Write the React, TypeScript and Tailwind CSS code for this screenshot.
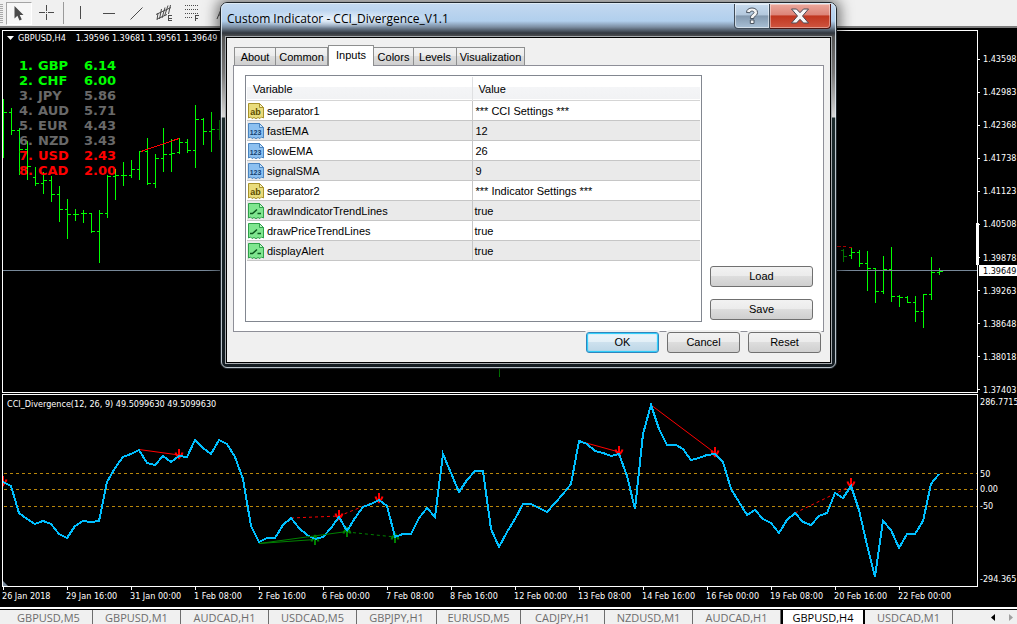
import React from "react";

type Bar = [x: number, high: number, low: number, open: number, close: number];

const bars: Bar[] = [
  [3, 99, 158, 112, 112], [11, 108, 135, 112, 130], [19, 128, 175, 130, 149], [27, 141, 180, 149, 166],
  [35, 167, 186, 177, 183], [43, 172, 194, 183, 180], [51, 176, 202, 180, 194], [59, 186, 222, 194, 209],
  [67, 199, 239, 209, 214], [75, 209, 221, 214, 214], [83, 210, 223, 213, 213], [91, 213, 233, 213, 231],
  [99, 210, 263, 231, 213], [107, 175, 218, 213, 176], [115, 169, 200, 176, 175], [123, 162, 186, 175, 175],
  [131, 160, 178, 175, 169], [139, 151, 180, 169, 151], [147, 138, 185, 151, 183], [155, 154, 188, 183, 158],
  [163, 128, 172, 158, 154], [171, 139, 172, 154, 153], [179, 138, 154, 152, 142], [187, 139, 153, 142, 150],
  [195, 105, 168, 150, 119], [203, 118, 145, 119, 131], [211, 112, 152, 131, 129], [219, 120, 140, 129, 129],
  [499, 350, 377, 360, 365],
  [843, 249, 262, 250, 256], [851, 248, 259, 255, 252], [859, 250, 267, 252, 263], [867, 251, 291, 263, 268],
  [875, 268, 303, 268, 291], [883, 256, 294, 291, 269], [891, 247, 302, 269, 296], [899, 295, 307, 296, 297],
  [907, 296, 303, 297, 302], [915, 296, 322, 302, 311], [923, 294, 328, 311, 294], [931, 257, 300, 294, 272],
  [939, 268, 275, 272, 271],
];

const cci =
  "3,482 11,486 19,513 27,519 35,524 43,521 51,524 59,534 67,538 75,526 83,521 91,522 99,521 107,482 115,468 123,457 131,454 139,450 147,463 155,465 163,456 171,462 179,456 187,457 195,440 203,448 211,454 219,440 227,444 235,457 243,479 251,526 259,542 267,538 275,538 283,525 291,518 299,528 307,535 315,539 323,537 331,528 339,517 347,531 355,518 363,507 371,504 379,500 387,506 395,537 403,534 411,534 419,518 427,508 435,517 443,454 451,473 459,492 467,480 475,471 483,471 491,529 499,547 507,532 515,519 523,504 531,504 539,508 547,512 555,503 563,494 571,484 579,441 587,444 595,451 603,453 611,456 619,454 627,476 635,509 643,434 651,405 659,429 667,445 676,445 683,449 691,460 699,458 707,455 715,454 723,462 731,489 739,502 747,515 755,510 763,519 771,523 779,533 787,520 795,513 803,522 811,525 819,516 827,513 835,493 843,498 851,486 859,510 867,545 875,577 883,521 891,530 899,548 907,534 915,534 923,521 931,484 939,474";

const prices = ["1.43598", "1.42983", "1.42368", "1.41738", "1.41123", "1.40508", "1.39878", "1.39263", "1.38648", "1.38018", "1.37403"];

const dates = [
  "26 Jan 2018", "29 Jan 16:00", "31 Jan 00:00", "1 Feb 08:00", "2 Feb 16:00", "6 Feb 00:00", "7 Feb 08:00", "8 Feb 16:00",
  "12 Feb 00:00", "13 Feb 08:00", "14 Feb 16:00", "16 Feb 00:00", "19 Feb 08:00", "20 Feb 16:00", "22 Feb 00:00",
];

const ranks = [
  ["1.", "GBP", "6.14", "text-[#00ff00]"],
  ["2.", "CHF", "6.00", "text-[#00ff00]"],
  ["3.", "JPY", "5.86", "text-[#696969]"],
  ["4.", "AUD", "5.71", "text-[#696969]"],
  ["5.", "EUR", "4.43", "text-[#696969]"],
  ["6.", "NZD", "3.43", "text-[#696969]"],
  ["7.", "USD", "2.43", "text-[#ff0000]"],
  ["8.", "CAD", "2.00", "text-[#ff0000]"],
];

const chartTabs = [
  ["GBPUSD,M5", "w-[88px]"], ["GBPUSD,M1", "w-[88px]"], ["AUDCAD,H1", "w-[88px]"], ["USDCAD,M5", "w-[88px]"],
  ["GBPJPY,H1", "w-[80px]"], ["EURUSD,M5", "w-[84px]"], ["CADJPY,H1", "w-[84px]"], ["NZDUSD,M1", "w-[88px]"],
  ["AUDCAD,H1", "w-[88px]"], ["GBPUSD,H4", "w-[84px]"], ["USDCAD,M1", "w-[88px]"],
];

const params: [kind: "ab" | "num" | "bool", name: string, value: string][] = [
  ["ab", "separator1", "*** CCI Settings ***"],
  ["num", "fastEMA", "12"],
  ["num", "slowEMA", "26"],
  ["num", "signalSMA", "9"],
  ["ab", "separator2", "*** Indicator Settings ***"],
  ["bool", "drawIndicatorTrendLines", "true"],
  ["bool", "drawPriceTrendLines", "true"],
  ["bool", "displayAlert", "true"],
];

const chartFont = "font-['DejaVu_Sans_Condensed','DejaVu_Sans',sans-serif] text-[9px] leading-[12px]";
const uiFont = "font-['Liberation_Sans',Arial,sans-serif] text-[11px]";

function Toolbar() {
  return (
    <header className="flex h-7 shrink-0 items-center border-b-2 border-[#7c7c7c] bg-[#f0f0f0] text-[#4b4b4b]">
      <svg width="6" height="24" className="shrink-0" shapeRendering="crispEdges">
        {[3, 5, 7, 9, 11, 13, 15, 17, 19, 21].map((y) => (
          <rect key={y} x="0" y={y} width="3" height="1" fill="#a9a9a9" />
        ))}
      </svg>
      <button aria-label="Cursor" className="flex h-[23px] w-[26px] items-center justify-center border border-[#fff] border-t-[#a5a5a5] border-l-[#a5a5a5] bg-[#f7f7f7]">
        <svg width="12" height="16" viewBox="0 0 12 16">
          <path d="M1.500 1v12.500l2.900-2.700L6.500 15.500l2.300-1-2.100-4.600H10.500z" fill="#4b4b4b" />
        </svg>
      </button>
      <button aria-label="Crosshair" className="ml-[7px]">
        <svg width="16" height="16" viewBox="0 0 16 16" stroke="currentColor" shapeRendering="crispEdges">
          <path d="M7.500 0v6M7.500 9v6M0 7.500h6M9 7.500h6M7 7.500h1" />
        </svg>
      </button>
      <span className="ml-2 h-[22px] w-px bg-[#9a9a9a]" />
      <button aria-label="Vertical line" className="ml-[9px]">
        <svg width="16" height="16" viewBox="0 0 16 16" stroke="currentColor" shapeRendering="crispEdges">
          <path d="M7.500 1v13" />
        </svg>
      </button>
      <button aria-label="Horizontal line" className="ml-[13px]">
        <svg width="16" height="16" viewBox="0 0 16 16" stroke="currentColor" shapeRendering="crispEdges">
          <path d="M1 8.500h12" />
        </svg>
      </button>
      <button aria-label="Trendline" className="ml-[11px]">
        <svg width="16" height="16" viewBox="0 0 16 16" stroke="currentColor">
          <path d="M1.500 14.500 13.500 2.500" />
        </svg>
      </button>
      <button aria-label="Equidistant channel" className="ml-[11px]">
        <svg width="18" height="18" viewBox="0 0 18 18" stroke="currentColor" fill="none">
          <path d="M0 10.500 15 3.500M1 15 11 10.500M2 9l-1 7M5.500 5l-2 10M9 3.500 6 14M12 1.500 8.500 12M14.500 1l-2 9" />
          <path d="M15.500 11.500h-3v5h3M12.500 14h3" shapeRendering="crispEdges" />
        </svg>
      </button>
      <button aria-label="Fibonacci retracement" className="ml-[10px]">
        <svg width="18" height="18" viewBox="0 0 18 18" stroke="currentColor" fill="none" shapeRendering="crispEdges">
          <path d="M1 1.500h14M1 5.500h14M1 9.500h14M1 13.500h8" strokeDasharray="1 1" />
          <path d="M11.500 17v-6M11 11.500h4M11 14.500h3" />
        </svg>
      </button>
      <button aria-label="Text" className="ml-[14px]">
        <svg width="12" height="16" viewBox="0 0 12 16" stroke="currentColor" fill="none">
          <path d="M1 14 6 2l5 12M3 10h6" />
        </svg>
      </button>
    </header>
  );
}

function PriceChart() {
  return (
    <section className="flex min-h-0 flex-1">
      <div className="relative min-w-0 flex-1 overflow-hidden border border-white">
        <svg className="absolute inset-0 size-full" shapeRendering="crispEdges">
          <g transform="translate(-3 -31)">
            <g fill="#00ff00">
              {bars.map(([x, high, low, open, close]) => (
                <g key={x} opacity={x === 843 || x === 219 || x === 499 ? 0.55 : 1}>
                  <rect x={x} y={high} width="1" height={low - high} />
                  <rect x={x - 2} y={open} width="2" height="1" />
                  <rect x={x + 1} y={close} width="3" height="1" />
                </g>
              ))}
            </g>
            <rect x="0" y="270" width="200%" height="1" fill="#778899" />
            <path d="M141 151.500 179 138.500" stroke="#ff0000" fill="none" />
            <path d="M836 246.500h5M843 246.500h3M849 247.500h3" stroke="#c00000" />
          </g>
        </svg>
        <div className={`relative flex items-center pt-px pl-[4px] text-white ${chartFont}`}>
          <svg width="7" height="4" viewBox="0 0 7 4" className="mr-[4px]">
            <path d="M0 0h7L3.500 4z" fill="#fff" />
          </svg>
          <span className="mr-[10px]">GBPUSD,H4</span>
          <span>1.39596 1.39681 1.39561 1.39649</span>
        </div>
        <ol className="relative mt-[14px] ml-4 w-[112px] font-['DejaVu_Sans',sans-serif] text-[13px] leading-[15px] font-bold">
          {ranks.map(([place, code, score, color]) => (
            <li key={code} className={`grid grid-cols-[19px_46px_1fr] ${color}`}>
              <span>{place}</span>
              <span>{code}</span>
              <span>{score}</span>
            </li>
          ))}
        </ol>
      </div>
      <div className={`relative -mb-[3px] flex w-[39px] shrink-0 flex-col justify-between pt-[23px] text-white ${chartFont}`}>
        {prices.map((price) => (
          <div key={price} className="flex items-center gap-[3px]">
            <span className="h-px w-[2px] shrink-0 bg-white" />
            {price}
          </div>
        ))}
        <span className="absolute top-[193px] -left-[2px] h-[42px] w-[3px] bg-white" />
        <span className="absolute top-[235px] left-px flex h-[11px] w-10 items-center bg-white pl-1 text-black">1.39649</span>
      </div>
    </section>
  );
}

function Arrow({ x, y, up = false }: { x: number; y: number; up?: boolean }) {
  return (
    <g transform={`translate(${x} ${y})${up ? " scale(1 -1)" : ""}`} stroke={up ? "#008000" : "#ff0000"} fill="none">
      <path d="M0-5V5" strokeWidth="2" />
      <path d="M-3.500-1.500C-3 1-1.500 2 0 4 1.500 2 3 1 3.500-1.500" strokeWidth="2" />
    </g>
  );
}

function IndicatorChart() {
  return (
    <section className="mt-px flex h-[193px] shrink-0">
      <div className="relative min-w-0 flex-1 overflow-hidden border border-white">
        <svg className="absolute inset-0 size-full">
          <g transform="translate(-3 -395)" fill="none">
            <path d="M4 473.500h2000M4 489.500h2000M4 506.500h2000" stroke="#b8860b" strokeDasharray="3 3" shapeRendering="crispEdges" />
            <g stroke="#ff0000">
              <path d="M139 449.500 179 455M579 441 619 452M651 405 715 453" />
              <path d="M291 518 339 516 379 500M795 513 851 486" strokeDasharray="3 3" />
            </g>
            <Arrow x={3} y={481} />
            <Arrow x={179} y={454} />
            <Arrow x={339} y={515} />
            <Arrow x={379} y={498} />
            <Arrow x={619} y={451} />
            <Arrow x={715} y={452} />
            <Arrow x={851} y={483} />
            <Arrow x={315} y={540} up />
            <Arrow x={347} y={532} up />
            <Arrow x={395} y={538} up />
            <polyline points={cci} stroke="#00bfff" strokeWidth="2" shapeRendering="crispEdges" />
            <g stroke="#008000">
              <path d="M259 543.500 347 531.500M259 543.500 315 539.500" />
              <path d="M347 532 395 537" strokeDasharray="3 3" />
            </g>
            <path d="M3 581v5h5z" fill="#778899" />
          </g>
        </svg>
        <p className={`relative pt-[3px] pl-[4px] text-white ${chartFont}`}>CCI_Divergence(12, 26, 9) 49.5099630 49.5099630</p>
      </div>
      <div className={`flex w-[39px] shrink-0 flex-col overflow-hidden pt-[2px] pl-[2px] text-white ${chartFont}`}>
        <span>286.7715</span>
        <span className="mt-[60px]">50</span>
        <span className="mt-[3px]">0.00</span>
        <span className="mt-[5px]">-50</span>
        <span className="mt-[61px]">-294.365</span>
      </div>
    </section>
  );
}

function ParamIcon({ kind }: { kind: "ab" | "num" | "bool" }) {
  const fill = kind === "ab" ? "#e9dc7c" : kind === "num" ? "#8cc0f0" : "#7fe68f";
  const edge = kind === "ab" ? "#a8922a" : kind === "num" ? "#4a84c0" : "#2fa04a";
  const ink = kind === "ab" ? "#5d4c00" : kind === "num" ? "#12406f" : "#0d5a20";
  return (
    <svg width="16" height="16" viewBox="0 0 16 16" className="shrink-0">
      <path d="M.5.500h11l4 4v10.500l-2-1-1.500 1.500-2-1-2 1.200-2-1.200-2 1-1.500-1.500-2 1z" fill={fill} stroke={edge} />
      <path d="M11.500.500v4h4z" fill="#fff" fillOpacity=".5" stroke={edge} />
      {kind === "bool" ? (
        <path d="M2 10.500h2.500l4.500-4M9.500 10.500H13" stroke={ink} strokeWidth="1.500" fill="none" />
      ) : (
        <text
          x="7.500"
          y="11.500"
          textAnchor="middle"
          fill={ink}
          className={kind === "ab" ? "font-['Liberation_Sans',sans-serif] text-[9px] font-bold" : "font-['Liberation_Sans',sans-serif] text-[7px] font-bold"}
        >
          {kind === "ab" ? "ab" : "123"}
        </text>
      )}
    </svg>
  );
}

function PushButton({ children, className = "" }: { children: React.ReactNode; className?: string }) {
  return (
    <button
      className={`h-[21px] rounded-[3px] border border-[#707070] bg-[linear-gradient(#f2f2f2_0%,#ebebeb_49%,#dddddd_50%,#cfcfcf_100%)] text-center text-[11px] leading-none text-black ${className}`}
    >
      {children}
    </button>
  );
}

function Tab({ label, className }: { label: string; className: string }) {
  return (
    <button
      role="tab"
      aria-selected="false"
      className={`h-[18px] border border-b-0 border-[#8e8f8f] bg-[linear-gradient(#f3f3f3_0%,#ebebeb_49%,#dddddd_50%,#cfcfcf_100%)] pt-px text-center ${className}`}
    >
      {label}
    </button>
  );
}

function InputsDialog() {
  return (
    <div
      role="dialog"
      aria-label="Custom Indicator - CCI_Divergence_V1.1"
      className={`absolute top-[2px] left-[220px] w-[617px] rounded-[7px] border border-[#20262c] bg-[linear-gradient(#c4d9f0_0px,#b1cfed_18px,#7c8ea2_24px,#30363e_30px,#555_34px,#777_70px,#d8d8d8_114px,#1c2a2c_115px,#141c22_100%)] shadow-[0_0_14px_3px_rgba(0,0,0,0.55)] ${uiFont} text-black`}
    >
      <div className="rounded-[6px] border border-[#e3edf5]/80 px-[4px] pb-[4px]">
        <div className="flex h-[33px] items-start rounded-t-[5px]">
          <h1 className="mt-[6px] bg-[radial-gradient(closest-side,rgba(255,255,255,0.75),rgba(255,255,255,0))] pl-px font-['Open_Sans','Noto_Sans',sans-serif] text-[12px] leading-[18px]">
            Custom Indicator - CCI_Divergence_V1.1
          </h1>
          <div className="ml-auto flex">
            <button aria-label="Help" className="flex h-[25px] w-9 items-center justify-center rounded-bl-[4px] border border-t-0 border-[#3f4b58] bg-[linear-gradient(#c9dcef_0%,#b3c8dd_45%,#8399af_50%,#a9c0d6_100%)] shadow-[inset_0_0_0_1px_rgba(255,255,255,0.5)]">
              <svg width="14" height="18" viewBox="0 0 14 18">
                <path
                  d="M1.500 5.500C1.500 2.500 4 1 7 1s5.500 1.600 5.500 4.400c0 2.600-1.700 3.300-3 4.300-.5.400-.6.900-.6 1.800H5.400c0-2 .4-3 1.800-4C8.300 6.700 9 6.300 9 5.500 9 4.600 8.200 4.100 7 4.100s-2 .6-2 1.600zM5.300 13h3.700v3.500H5.300z"
                  fill="#f4f4f4"
                  stroke="#4a5461"
                />
              </svg>
            </button>
            <button aria-label="Close" className="flex h-[25px] w-[61px] items-center justify-center rounded-br-[4px] border border-t-0 border-l-0 border-[#4a1410] bg-[linear-gradient(#eba89c_0%,#dc8478_45%,#c0361f_50%,#cf5540_100%)] shadow-[inset_0_0_0_1px_rgba(255,255,255,0.4)]">
              <svg width="20" height="16" viewBox="0 0 20 16">
                <path d="M1.500 1h5L10 4.700 13.500 1h5l-6 7 6 7h-5L10 11.300 6.500 15h-5l6-7z" fill="#f6f6f6" stroke="#4d4a55" />
              </svg>
            </button>
          </div>
        </div>

        <div className="border border-black bg-[#f0f0f0] pr-[6px] pb-[9px] pl-[6px] outline outline-1 outline-[#a5a9ad]">
          <div role="tablist" className="mt-[7px] flex items-end pl-px">
            <Tab label="About" className="w-[42px]" />
            <Tab label="Common" className="w-[52px] border-l-0" />
            <button role="tab" aria-selected="true" className="relative -mb-px h-[21px] w-[46px] border border-b-0 border-[#8e8f8f] bg-white pb-px text-center">
              Inputs
            </button>
            <Tab label="Colors" className="w-10 border-l-0" />
            <Tab label="Levels" className="w-[43px] border-l-0" />
            <Tab label="Visualization" className="w-[68px] border-l-0" />
          </div>

          <div className="flex border border-[#8e8f98] bg-white pt-[9px] pr-[10px] pb-[9px] pl-[11px]">
            <div className="h-[247px] min-w-0 flex-1 border border-[#828790] p-px">
              <table className="w-full table-fixed border-collapse">
                <thead>
                  <tr className="h-[23px] border-b border-[#d5d5d5] bg-[linear-gradient(#ffffff_0%,#ffffff_45%,#f4f5f7_46%,#f1f2f4_100%)] text-left">
                    <th className="w-[225px] border-r border-[#dfe0e2] pt-[2px] pl-[6px] font-normal">Variable</th>
                    <th className="pt-[2px] pl-[6px] font-normal">Value</th>
                  </tr>
                </thead>
                <tbody>
                  {params.map(([kind, name, value]) => (
                    <tr key={name} className="h-5 border-b border-[#c6c6c6] even:bg-[#eaeaea]">
                      <td className="border-r border-[#c6c6c6] py-0 pl-px">
                        <span className="flex items-center gap-[3px] pt-px leading-[16px]">
                          <ParamIcon kind={kind} />
                          {name}
                        </span>
                      </td>
                      <td className={kind === "bool" ? "pt-px pl-[2px] leading-[16px]" : "pt-px pl-[3px] leading-[16px]"}>{value}</td>
                    </tr>
                  ))}
                </tbody>
              </table>
            </div>
            <div className="ml-2 flex w-[103px] flex-col justify-end gap-3 pb-[2px]">
              <PushButton>Load</PushButton>
              <PushButton>Save</PushButton>
            </div>
          </div>

          <div className="flex justify-end gap-2 pr-[3px]">
            <button className="relative h-[21px] w-[73px] rounded-[3px] border border-[#2f86bd] bg-[linear-gradient(#edf5fa_0%,#e2eff7_49%,#cde1ee_50%,#bcd6e6_100%)] text-center text-[11px] leading-none shadow-[inset_0_0_1px_1px_#22ccfb,0_0_0_2px_#f0f0f0]">
              OK
            </button>
            <PushButton className="relative w-[73px] shadow-[0_0_0_2px_#f0f0f0]">Cancel</PushButton>
            <PushButton className="relative w-[73px] shadow-[0_0_0_2px_#f0f0f0]">Reset</PushButton>
          </div>
        </div>
      </div>
    </div>
  );
}

export default function App() {
  return (
    <div className="relative flex h-screen flex-col overflow-hidden bg-black">
      <Toolbar />
      <main className="flex min-h-0 flex-1 flex-col pt-[2px] pl-[2px]">
        <PriceChart />
        <IndicatorChart />
        <div className={`flex h-5 shrink-0 overflow-hidden text-white ${chartFont}`}>
          {dates.map((date) => (
            <div key={date} className="w-16 shrink-0 whitespace-nowrap">
              <div className="ml-px h-[3px] w-px bg-white" />
              {date}
            </div>
          ))}
        </div>
      </main>
      <nav className="flex h-[17px] shrink-0 overflow-hidden border-t-2 border-white bg-[#f0f0f0] font-['Open_Sans','Noto_Sans',sans-serif] text-[11px] leading-[16px] text-[#6d6d6d]">
        <span className="w-[5px] border-t border-black" />
        {chartTabs.map(([label, width], index) =>
          label === "GBPUSD,H4" ? (
            <button key={index} aria-current="page" className={`shrink-0 border-x-2 border-t border-black bg-white text-center text-black ${width}`}>
              {label}
            </button>
          ) : (
            <button key={index} className={`shrink-0 border-t border-black text-center ${width}`}>
              <span className="block border-r border-[#6d6d6d]">{label}</span>
            </button>
          ),
        )}
        <span className="flex flex-1 items-center justify-end gap-[14px] border-t border-black pr-1">
          <button aria-label="Scroll left">
            <svg width="4" height="7" viewBox="0 0 4 7" className="block">
              <path d="M4 0v7L0 3.500z" fill="#000" />
            </svg>
          </button>
          <button aria-label="Scroll right">
            <svg width="4" height="7" viewBox="0 0 4 7" className="block">
              <path d="M0 0v7l4-3.500z" fill="#a0a0a0" />
            </svg>
          </button>
        </span>
      </nav>
      <InputsDialog />
    </div>
  );
}
